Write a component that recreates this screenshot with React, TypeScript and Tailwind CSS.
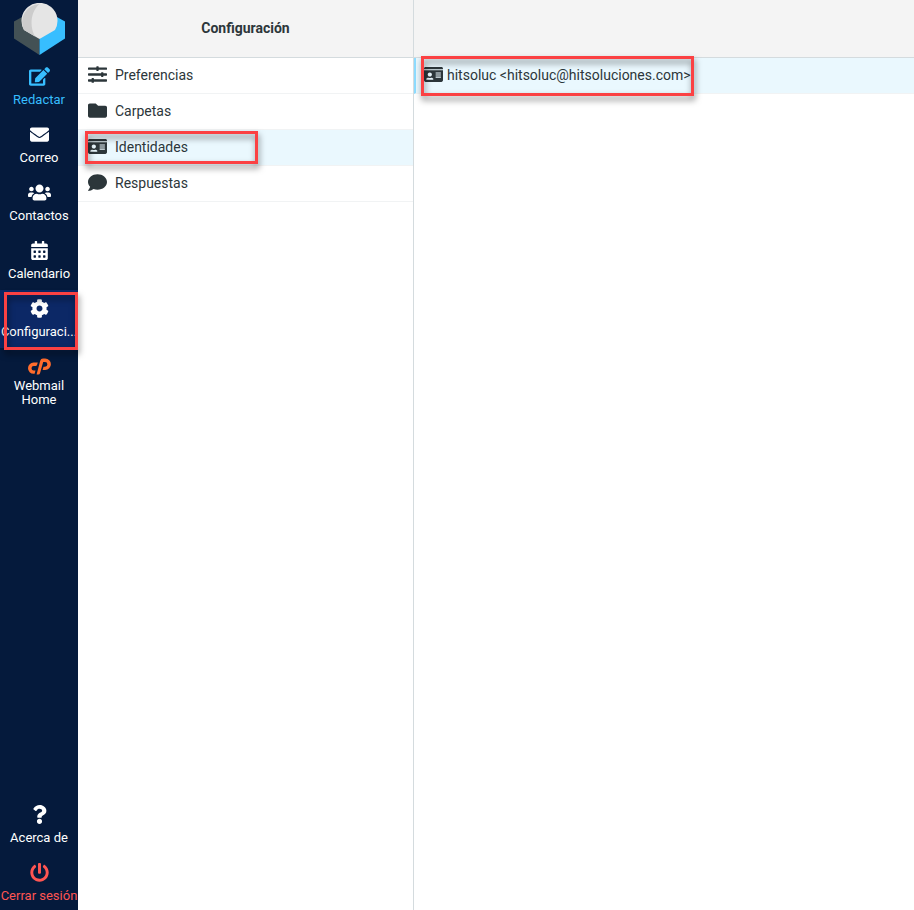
import type { ReactNode } from "react";
import {
  FaCalendarAlt,
  FaCog,
  FaComment,
  FaEdit,
  FaEnvelope,
  FaFolder,
  FaIdCard,
  FaPowerOff,
  FaQuestion,
  FaSlidersH,
  FaUsers,
} from "react-icons/fa";

const CpanelIcon = () => (
  <svg viewBox="0 0 23 17" className="w-[23px] h-[17px]" fill="#ff6c2c">
    <path d="M9.8 4.6H5.6a5.6 5.6 0 0 0 0 11.2h1l.9-3.3H5.7a2.2 2.2 0 0 1 0-4.400h1.900a1.500 1.500 0 0 0 1.400-1.100z" />
    <path d="M8.600 16.500 12.200 2.800A3 3 0 0 1 15 .6h2.200a5.700 5.700 0 0 1 0 11.400h-2.600l.9-3.300H17a2.400 2.400 0 0 0 0-4.800h-1.800L12 15.200a1.800 1.800 0 0 1-1.700 1.300z" />
  </svg>
);

const Logo = () => (
  <svg viewBox="0 0 52 52" className="w-[52px] h-[52px]" role="img" aria-label="Roundcube">
    <path d="M1 18.500 10 13.500 26.500 36v16L1 35.500z" fill="#435155" />
    <path d="M52 18.500 43 13.500 26.500 36v16L52 35.500z" fill="#37beff" />
    <path d="M26.500 36 11 27a18 18 0 1 1 31 0z" fill="#e5e5e5" />
    <path d="M26.500 1A18 18 0 0 0 11 27l11 6.400C16 23 18 8 26.500 1z" fill="#ccc" />
  </svg>
);

type NavItem = {
  label: string;
  icon: ReactNode;
  className?: string;
  selected?: boolean;
};

const navItems: NavItem[] = [
  { label: "Redactar", icon: <FaEdit className="size-[21px]" />, className: "text-[#37beff]" },
  { label: "Correo", icon: <FaEnvelope className="size-[19px]" /> },
  { label: "Contactos", icon: <FaUsers className="size-[23px]" /> },
  { label: "Calendario", icon: <FaCalendarAlt className="size-[19px]" /> },
  { label: "Configuraci...", icon: <FaCog className="size-[19px]" />, selected: true },
];

const footerItems: NavItem[] = [
  { label: "Acerca de", icon: <FaQuestion className="size-[19px]" /> },
  { label: "Cerrar sesión", icon: <FaPowerOff className="size-[19px]" />, className: "text-[#ff5552]" },
];

const sections = [
  { label: "Preferencias", icon: FaSlidersH },
  { label: "Carpetas", icon: FaFolder },
  { label: "Identidades", icon: FaIdCard, selected: true },
  { label: "Respuestas", icon: FaComment },
];

const Highlight = ({ className }: { className: string }) => (
  <span
    aria-hidden="true"
    className={`absolute z-10 pointer-events-none border-3 border-[#fb4143] drop-shadow-[1px_4px_3px_rgba(0,0,0,0.5)] ${className}`}
  />
);

function NavLink({ label, icon, className = "text-white", selected }: NavItem) {
  return (
    <a
      href="#"
      className={`relative flex flex-col items-center h-[58px] pt-2 text-[13px] leading-5 ${className} ${
        selected ? "bg-[#0c2866]" : ""
      }`}
    >
      <span className="flex items-center justify-center h-5">{icon}</span>
      <span className="mt-1 whitespace-nowrap">{label}</span>
      {selected && <Highlight className="left-1 right-0 top-[2px] -bottom-[2px]" />}
    </a>
  );
}

export default function App() {
  return (
    <div className="flex min-h-screen bg-white text-sm text-[#2c363a] font-['Roboto',sans-serif]">
      <nav className="flex flex-col w-[78px] shrink-0 bg-[#051a3c]">
        <div className="flex justify-center h-[58px] pt-[3px]">
          <Logo />
        </div>
        {navItems.map((item) => (
          <NavLink key={item.label} {...item} />
        ))}
        <a href="#" className="flex flex-col items-center pt-[10px] text-[13px] leading-[14px] text-white text-center">
          <CpanelIcon />
          <span className="px-3 mt-1">Webmail Home</span>
        </a>
        <div className="flex flex-col gap-[2px] mt-auto [&>a]:h-14">
          {footerItems.map((item) => (
            <NavLink key={item.label} {...item} />
          ))}
        </div>
      </nav>

      <aside className="w-[336px] shrink-0 border-r border-[#d4dbde]">
        <header className="flex items-center justify-center h-[58px] pb-[2px] bg-[#f4f4f4] border-b border-[#d4dbde]">
          <h1 className="font-bold">Configuración</h1>
        </header>
        <ul>
          {sections.map(({ label, icon: Icon, selected }) => (
            <li key={label} className={`relative border-b border-[#f1f3f4] ${selected ? "bg-[#eaf8fe]" : ""}`}>
              <a href="#" className="flex items-center h-[35px] gap-2 pl-[10px] pb-[2px]">
                <Icon className="size-[19px]" />
                {label}
              </a>
              {selected && <Highlight className="left-[7px] w-[173px] top-px h-[33px]" />}
            </li>
          ))}
        </ul>
      </aside>

      <main className="flex-1 min-w-0">
        <div className="h-[58px] bg-[#f4f4f4] border-b border-[#d4dbde]" />
        <ul>
          <li className="border-b border-l-2 border-b-[#f1f3f4] border-l-[#8edcff] bg-[#eaf8fe]">
            <a href="#" className="relative inline-flex items-center h-[35px] gap-1 pl-2 pb-[2px]">
              <FaIdCard className="size-[19px]" />
              hitsoluc &lt;hitsoluc@hitsoluciones.com&gt;
              <Highlight className="left-[5px] -right-[3px] -top-[2px] h-10" />
            </a>
          </li>
        </ul>
      </main>
    </div>
  );
}
